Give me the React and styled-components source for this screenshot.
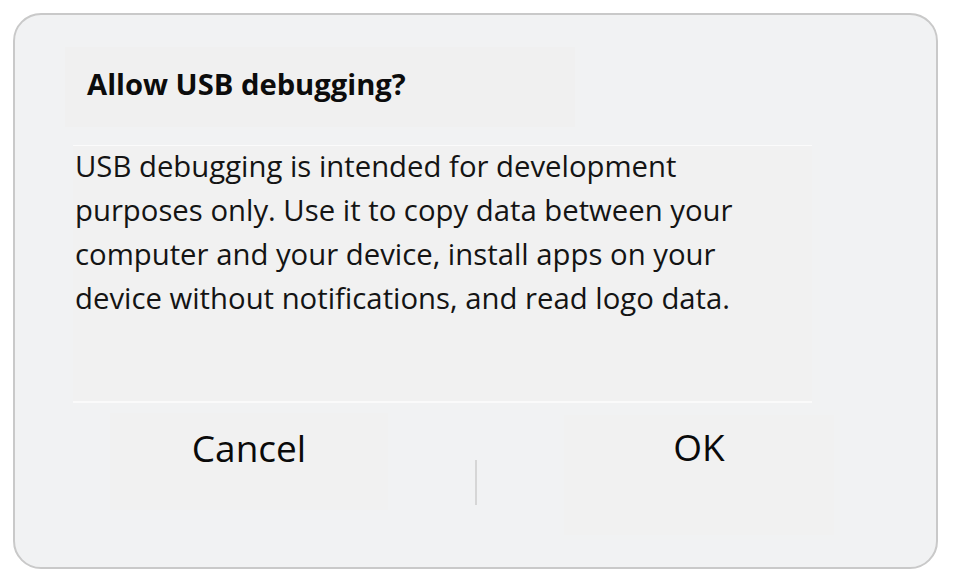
import React from "react";
import styled, { createGlobalStyle } from "styled-components";

const Global = createGlobalStyle`
    body {
        margin: 0;
        background: #ffffff;
        font-family: "Open Sans", "Noto Sans", sans-serif;
    }
`;

const Card = styled.div`
    box-sizing: border-box;
    margin: 13px;
    width: 925px;
    height: 556px;
    border: 2px solid #c9c9c9;
    border-radius: 28px;
    background-color: #f1f2f3;
    display: flex;
    flex-direction: column;
`;

const TitleBox = styled.div`
    margin: 32px 0 0 50px;
    width: 510px;
    height: 80px;
    padding: 0 0 7px 22px;
    box-sizing: border-box;
    display: flex;
    align-items: center;
    background-color: #f0f0f0;
`;

const Title = styled.h2`
    margin: 0;
    font-size: 29.2px;
    font-weight: 700;
    color: #0c0c0c;
`;

const Body = styled.div`
    margin: 18px 0 0 58px;
    width: 739px;
    height: 258px;
    box-sizing: border-box;
    padding: 0 0 0 2px;
    border-top: 1px solid #fbfbfb;
    border-bottom: 2px solid #fafafa;
    background-color: #f1f1f1;
`;

const Message = styled.p`
    margin: -2px 0 0;
    width: 705px;
    font-size: 29.3px;
    line-height: 44px;
    color: #141414;
`;

const Footer = styled.div`
    display: flex;
    align-items: flex-start;
    padding-left: 95px;
`;

const Button = styled.div`
    box-sizing: border-box;
    width: ${p => p.w}px;
    height: ${p => p.h}px;
    margin-top: ${p => p.top}px;
    padding-top: ${p => p.pad}px;
    text-align: center;
    font-size: 37px;
    line-height: 38px;
    color: #0a0a0a;
    background-color: #f1f1f1;
`;

const Divider = styled.div`
    width: 2px;
    height: 45px;
    margin: 57px 87px 0 87px;
    background-color: #d6d6d6;
`;

const App = () => {
    return (
        <>
            <Global />
            <Card>
                <TitleBox>
                    <Title>Allow USB debugging?</Title>
                </TitleBox>
                <Body>
                    <Message>
                        USB debugging is intended for development purposes only. Use it to copy data between your computer and your device, install apps on your device without notifications, and read logo data.
                    </Message>
                </Body>
                <Footer>
                    <Button w={278} h={97} top={10} pad={16}>Cancel</Button>
                    <Divider />
                    <Button w={270} h={120} top={12} pad={13}>OK</Button>
                </Footer>
            </Card>
        </>
    );
};

export default App;
